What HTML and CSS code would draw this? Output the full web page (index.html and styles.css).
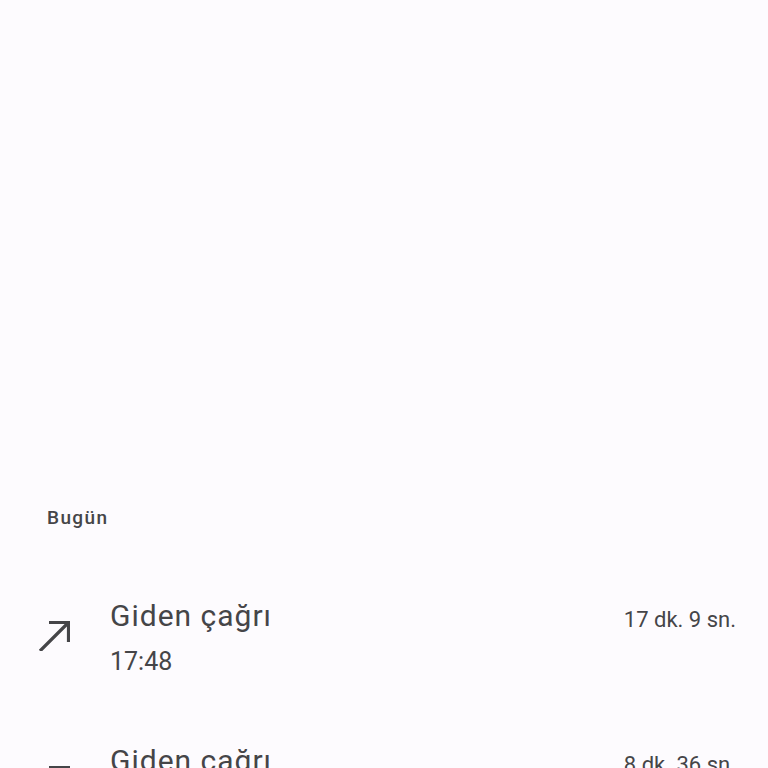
FILE: index.html
```html
<!DOCTYPE html>
<html>
  <head>
    <title>Arama geçmişi</title>
    <link rel="stylesheet" href="styles.css">
  </head>
  <body>
    <div class="screen">
      <div class="blank"></div>

      <div class="section-title">Bugün</div>

      <div class="call-row">
        <svg class="call-icon" viewBox="0 0 32 32">
          <path d="M11 3.5H30.5V23M30.5 3.5L2 32" />
        </svg>
        <div class="call-info">
          <div class="call-type">Giden çağrı</div>
          <div class="call-time">17:48</div>
        </div>
        <div class="call-duration">17 dk. 9 sn.</div>
      </div>

      <div class="call-row">
        <svg class="call-icon" viewBox="0 0 32 32">
          <path d="M11 3.5H30.5V23M30.5 3.5L2 32" />
        </svg>
        <div class="call-info">
          <div class="call-type">Giden çağrı</div>
          <div class="call-time">17:12</div>
        </div>
        <div class="call-duration">8 dk. 36 sn.</div>
      </div>
    </div>
  </body>
</html>
```

FILE: styles.css
```css
body {
  margin: 0;
  background-color: #fdfbfe;
  font-family: Roboto, "Noto Sans", sans-serif;
  color: #454548;
}

.screen {
  height: 768px;
  overflow: hidden;
  display: flex;
  flex-direction: column;
}

.blank {
  height: 500px;
  flex-shrink: 0;
}

.section-title {
  padding-left: 47px;
  font-size: 19px;
  font-weight: 500;
  letter-spacing: 1.4px;
  line-height: 36px;
  flex-shrink: 0;
}

.call-row {
  display: flex;
  align-items: flex-start;
  padding: 60px 32px 1px 38px;
  flex-shrink: 0;
}

.call-icon {
  width: 32px;
  height: 32px;
  margin-top: 23px;
  fill: none;
  stroke: #454548;
  stroke-width: 3.2;
  flex-shrink: 0;
}

.call-info {
  flex: 1;
  margin-left: 40px;
}

.call-type {
  font-size: 30px;
  letter-spacing: 1px;
  line-height: 40px;
}

.call-time {
  margin-top: 8px;
  font-size: 25px;
  line-height: 36px;
}

.call-duration {
  margin-top: 4px;
  font-size: 22px;
  line-height: 40px;
}
```
